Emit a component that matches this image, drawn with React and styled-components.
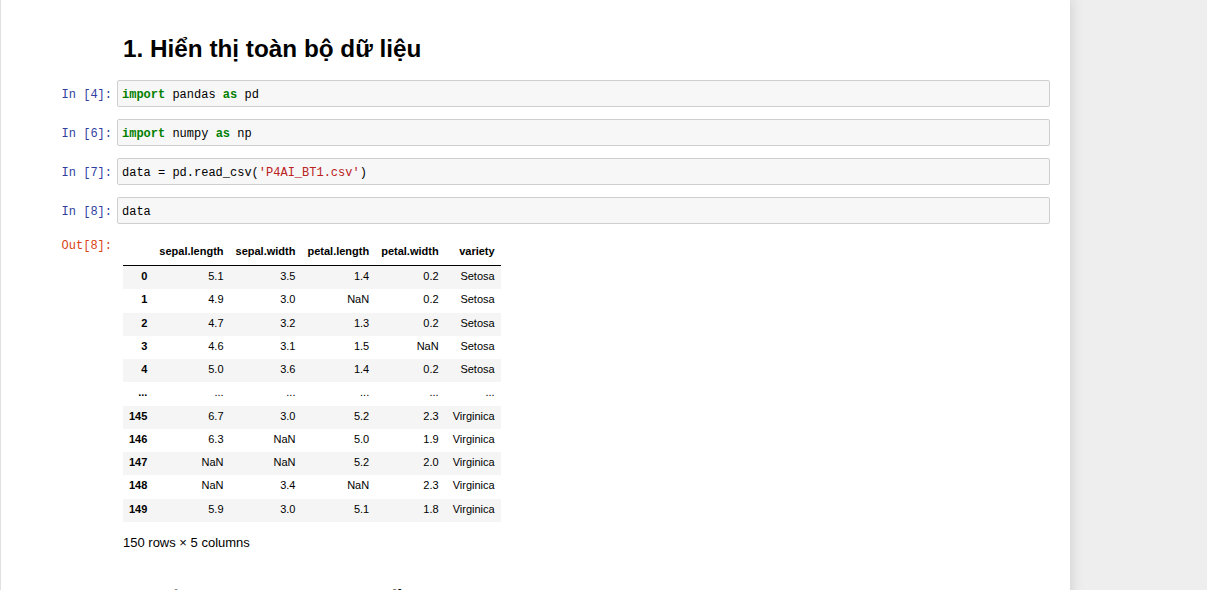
import React from "react";
import styled, { createGlobalStyle } from "styled-components";

const GlobalStyle = createGlobalStyle`
  html, body {
    margin: 0;
    padding: 0;
    overflow: hidden;
    background: #eeeeee;
  }
`;

const Page = styled.div`
  display: flex;
  height: 590px;
  overflow: hidden;
`;

const Notebook = styled.div`
  box-sizing: border-box;
  width: 1070px;
  min-height: 700px;
  background: #fff;
  border-left: 1px solid #e0e0e0;
  box-shadow: 0px 0px 12px 1px rgba(87, 87, 87, 0.2);
  padding-right: 20px;
`;

const MarkdownCell = styled.div`
  padding: ${(p) => p.$top}px 0 17px 122px;
`;

const Heading = styled.h1`
  margin: 0;
  font-family: "Liberation Sans", Arial, sans-serif;
  font-weight: bold;
  font-size: 24.3px;
  line-height: 28px;
  color: #000;
`;

const Cell = styled.div`
  display: flex;
  align-items: flex-start;
  padding-bottom: ${(p) => p.$gap ?? 12}px;
`;

const Prompt = styled.div`
  box-sizing: border-box;
  width: 116px;
  flex-shrink: 0;
  padding: 7px 5px 0 0;
  text-align: right;
  font-family: "Liberation Mono", "DejaVu Sans Mono", monospace;
  font-size: 12px;
  line-height: 17px;
  color: ${(p) => (p.$out ? "#D84315" : "#303F9F")};
`;

const InputBox = styled.div`
  flex: 1;
  box-sizing: border-box;
  height: 27px;
  padding: 6px 4px 2px 4px;
  background: #f7f7f7;
  border: 1px solid #cfcfcf;
  border-radius: 2px;
  font-family: "Liberation Mono", "DejaVu Sans Mono", monospace;
  font-size: 12px;
  line-height: 17px;
  color: #000;
  white-space: pre;
`;

const tokenColors = {
  kw: "#008000",
  str: "#BA2121",
  txt: "#000",
};

const Token = styled.span`
  color: ${(p) => tokenColors[p.$kind]};
  font-weight: ${(p) => (p.$kind === "kw" ? "bold" : "normal")};
`;

const OutputCell = styled.div`
  display: flex;
  align-items: flex-start;
  padding-top: 7px;
`;

const OutputBody = styled.div`
  padding: 10px 0 0 6px;
  font-family: "Liberation Sans", Arial, sans-serif;
  color: #000;
`;

const Table = styled.table`
  border-collapse: collapse;
  border: none;
  font-size: 11px;
  line-height: 13px;

  th, td {
    text-align: right;
    white-space: nowrap;
    padding: 4px 6px 6.25px 6px;
  }

  td:last-child {
    padding-left: 8px;
  }

  thead th {
    padding: 4px 6px 7px 6px;
    border-bottom: 1px solid #000;
    vertical-align: bottom;
  }

  tbody th {
    font-weight: bold;
  }

  tbody tr:nth-child(odd) {
    background: #f5f5f5;
  }
`;

const Summary = styled.p`
  margin: 13px 0 0 0;
  font-size: 13px;
  line-height: 15px;
`;

const cells = [
  { n: 4, code: [["kw", "import"], ["txt", " pandas "], ["kw", "as"], ["txt", " pd"]] },
  { n: 6, code: [["kw", "import"], ["txt", " numpy "], ["kw", "as"], ["txt", " np"]] },
  { n: 7, code: [["txt", "data = pd.read_csv("], ["str", "'P4AI_BT1.csv'"], ["txt", ")"]] },
  { n: 8, code: [["txt", "data"]] },
];

const columns = ["sepal.length", "sepal.width", "petal.length", "petal.width", "variety"];

const rows = [
  ["0", "5.1", "3.5", "1.4", "0.2", "Setosa"],
  ["1", "4.9", "3.0", "NaN", "0.2", "Setosa"],
  ["2", "4.7", "3.2", "1.3", "0.2", "Setosa"],
  ["3", "4.6", "3.1", "1.5", "NaN", "Setosa"],
  ["4", "5.0", "3.6", "1.4", "0.2", "Setosa"],
  ["...", "...", "...", "...", "...", "..."],
  ["145", "6.7", "3.0", "5.2", "2.3", "Virginica"],
  ["146", "6.3", "NaN", "5.0", "1.9", "Virginica"],
  ["147", "NaN", "NaN", "5.2", "2.0", "Virginica"],
  ["148", "NaN", "3.4", "NaN", "2.3", "Virginica"],
  ["149", "5.9", "3.0", "5.1", "1.8", "Virginica"],
];

const DataFrame = () => (
  <Table>
    <thead>
      <tr>
        <th></th>
        {columns.map((c) => (
          <th key={c}>{c}</th>
        ))}
      </tr>
    </thead>
    <tbody>
      {rows.map((r) => (
        <tr key={r[0] + r[1]}>
          <th>{r[0]}</th>
          {r.slice(1).map((v, i) => (
            <td key={i}>{v}</td>
          ))}
        </tr>
      ))}
    </tbody>
  </Table>
);

export default function App() {
  return (
    <Page>
      <GlobalStyle />
      <Notebook>
        <MarkdownCell $top={35}>
          <Heading>1. Hiển thị toàn bộ dữ liệu</Heading>
        </MarkdownCell>

        {cells.map((c, i) => (
          <Cell key={c.n} $gap={i === cells.length - 1 ? 0 : 12}>
            <Prompt>In [{c.n}]:</Prompt>
            <InputBox>
              {c.code.map(([kind, text], j) => (
                <Token key={j} $kind={kind}>
                  {text}
                </Token>
              ))}
            </InputBox>
          </Cell>
        ))}

        <OutputCell>
          <Prompt $out>Out[8]:</Prompt>
          <OutputBody>
            <DataFrame />
            <Summary>150 rows × 5 columns</Summary>
          </OutputBody>
        </OutputCell>

        <MarkdownCell $top={36}>
          <Heading>2. Điền các giá trị bị thiếu</Heading>
        </MarkdownCell>
      </Notebook>
    </Page>
  );
}
